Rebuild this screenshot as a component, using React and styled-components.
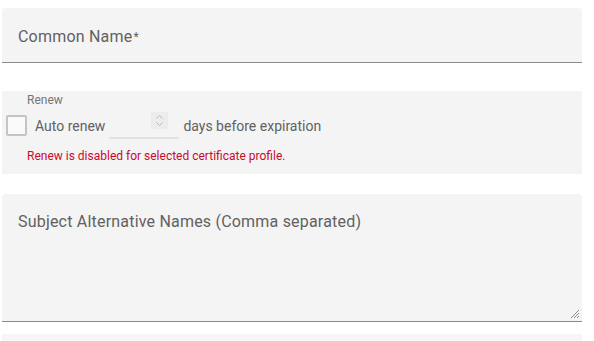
import React from 'react'
import styled, { createGlobalStyle } from 'styled-components'

const GlobalStyle = createGlobalStyle`
  body {
    margin: 0;
    background: #fff;
    font-family: Roboto, "Liberation Sans", sans-serif;
  }
`

const Form = styled.div`
  width: 580px;
  padding: 8px 12px 0 2px;
  display: flex;
  flex-direction: column;
`

const TextField = styled.div`
  height: ${({ h }) => h}px;
  background: #f4f4f4;
  border-radius: 4px 4px 0 0;
  border-bottom: 1px solid #8a8a8a;
  box-sizing: border-box;
  position: relative;
  display: flex;
  align-items: ${({ top }) => (top ? 'flex-start' : 'center')};
  padding: ${({ top }) => (top ? '18px 16px 0' : '3px 16px 0')};
  margin-bottom: ${({ mb }) => mb}px;
`

const Label = styled.span`
  font-size: 16px;
  color: #616161;
  letter-spacing: 0.2px;
`

const Star = styled.span`
  font-size: 12px;
  position: relative;
  top: -1px;
  margin-left: 1px;
`

const Grip = styled.svg`
  position: absolute;
  right: 2px;
  bottom: 2px;
`

const RenewBox = styled.div`
  height: 83px;
  background: #f4f4f4;
  box-sizing: border-box;
  padding: 2px 0 0 4px;
  margin-bottom: 20px;
  display: flex;
  flex-direction: column;
`

const SmallLabel = styled.div`
  font-size: 12px;
  color: #757575;
  padding-left: 21px;
  line-height: 14px;
`

const Row = styled.div`
  display: flex;
  align-items: center;
  margin-top: 7px;
  height: 24px;
`

const Checkbox = styled.span`
  width: 17px;
  height: 17px;
  border: 2px solid #c4c4c4;
  border-radius: 2px;
  background: #fafafa;
  position: relative;
  top: -1px;
`

const RowText = styled.span`
  font-size: 14px;
  color: #616161;
  margin-left: ${({ ml }) => ml}px;
`

const NumberInput = styled.div`
  width: 70px;
  height: 24px;
  margin-left: 4px;
  border-bottom: 2px solid #e2e2e2;
  box-sizing: border-box;
  position: relative;
  top: 1px;
`

const Spinner = styled.div`
  position: absolute;
  left: 42px;
  top: -3px;
  width: 17px;
  height: 17px;
  background: #ececec;
  display: flex;
  align-items: center;
  justify-content: center;
`

const ErrorText = styled.div`
  font-size: 12px;
  color: #c80a2d;
  padding-left: 21px;
  margin-top: 11px;
`

const BottomStrip = styled.div`
  height: 10px;
  margin-top: 12px;
  background: #f6f6f6;
`

export default function App() {
  return (
    <>
      <GlobalStyle />
      <Form>
        <TextField h={55} mb={28}>
          <Label>
            Common Name<Star>*</Star>
          </Label>
        </TextField>

        <RenewBox>
          <SmallLabel>Renew</SmallLabel>
          <Row>
            <Checkbox />
            <RowText ml={8}>Auto renew</RowText>
            <NumberInput>
              <Spinner>
                <svg width="9" height="13" viewBox="0 0 9 13">
                  <path d="M1.5 4.5 L4.5 1.5 L7.5 4.5" fill="none" stroke="#b8b8b8" strokeWidth="1" />
                  <path d="M1.5 8.5 L4.5 11.5 L7.5 8.5" fill="none" stroke="#b8b8b8" strokeWidth="1" />
                </svg>
              </Spinner>
            </NumberInput>
            <RowText ml={4}>days before expiration</RowText>
          </Row>
          <ErrorText>Renew is disabled for selected certificate profile.</ErrorText>
        </RenewBox>

        <TextField h={128} top>
          <Label>Subject Alternative Names (Comma separated)</Label>
          <Grip width="10" height="10" viewBox="0 0 10 10">
            <path d="M9 1 L1 9 M9 4 L4 9 M9 7 L7 9" stroke="#8a8a8a" strokeWidth="1" />
          </Grip>
        </TextField>

        <BottomStrip />
      </Form>
    </>
  )
}
